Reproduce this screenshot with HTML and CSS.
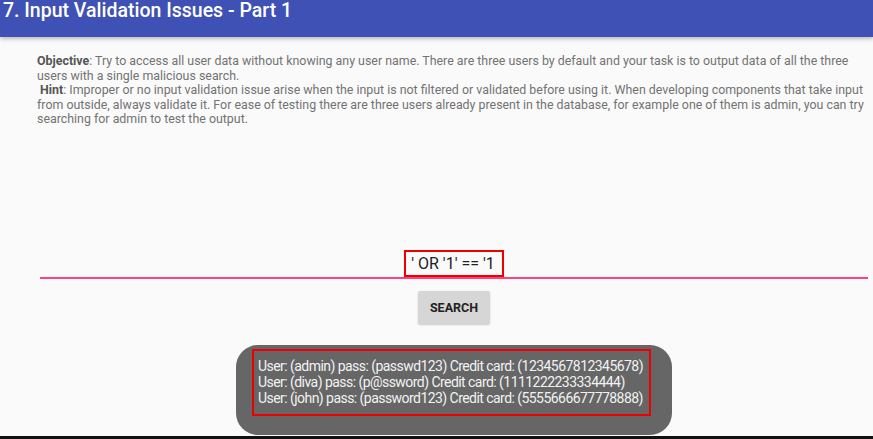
FILE: index.html
```html
<!DOCTYPE html>
<html>
<head>
<meta charset="utf-8">
<link rel="stylesheet" href="styles.css">
</head>
<body>
<div class="screen">
  <header class="appbar">7. Input Validation Issues - Part 1</header>
  <main class="content">
    <p class="desc"><b>Objective</b>: Try to access all user data without knowing any user name. There are three users by default and your task is to output data of all the three users with a single malicious search.<br>&nbsp;<b>Hint</b>: Improper or no input validation issue arise when the input is not filtered or validated before using it. When developing components that take input from outside, always validate it. For ease of testing there are three users already present in the database, for example one of them is admin, you can try searching for admin to test the output.</p>
    <div class="field">
      <span class="query">' OR '1' == '1</span>
    </div>
    <div class="actions">
      <button class="btn">SEARCH</button>
    </div>
  </main>
  <div class="toast">
    <div class="result">
      <div>User: (admin) pass: (passwd123) Credit card: (1234567812345678)</div>
      <div>User: (diva) pass: (p@ssword) Credit card: (1111222233334444)</div>
      <div>User: (john) pass: (password123) Credit card: (5555666677778888)</div>
    </div>
  </div>
  <div class="navline"></div>
</div>
</body>
</html>
```
FILE: styles.css
```css
html, body {
  margin: 0;
  padding: 0;
}
body {
  background: #fafafa;
  font-family: Roboto, "Noto Sans", sans-serif;
  width: 873px;
  height: 439px;
  overflow: hidden;
}
.screen {
  position: relative;
  width: 873px;
  height: 439px;
  display: flex;
  flex-direction: column;
}
.appbar {
  height: 37px;
  background: #3f51b5;
  color: #fff;
  font-size: 19.5px;
  font-weight: 500;
  line-height: 22px;
  padding-left: 3px;
  box-sizing: border-box;
  box-shadow: 0 2px 4px rgba(0,0,0,0.25);
  position: relative;
  z-index: 1;
}
.content {
  display: flex;
  flex-direction: column;
}
.desc {
  margin: 17px 3px 0 37px;
  font-size: 12.4px;
  line-height: 14.5px;
  color: #737373;
}
.desc b {
  color: #555;
  font-weight: 700;
}
.field {
  margin: 122px 5px 0 40px;
  height: 28px;
  border-bottom: 2px solid #ff4081;
  display: flex;
  justify-content: center;
  align-items: flex-end;
}
.query {
  font-size: 16px;
  color: #212121;
  border: 2px solid #e00;
  padding: 2px 7px 1px 5px;
  line-height: 20px;
}
.actions {
  display: flex;
  justify-content: center;
  margin-top: 12px;
  padding-left: 35px;
}
.btn {
  width: 72px;
  height: 33px;
  border: none;
  border-radius: 2px;
  background: #d6d6d6;
  font-family: Roboto, sans-serif;
  font-weight: 700;
  font-size: 12.5px;
  color: #222;
  box-shadow: 0 1px 2px rgba(0,0,0,0.2);
}
.toast {
  position: absolute;
  left: 236px;
  top: 345px;
  width: 436px;
  height: 90px;
  background: #666;
  border-radius: 22px;
  box-sizing: border-box;
  padding: 4px 0 0 16px;
}
.result {
  width: 399px;
  height: 67px;
  box-sizing: border-box;
  border: 2px solid #e00;
  color: #f2f2f2;
  font-size: 14px;
  line-height: 16px;
  padding: 7px 0 0 4px;
  letter-spacing: -0.55px;
  white-space: nowrap;
}
.navline {
  position: absolute;
  left: 0;
  bottom: 0;
  width: 873px;
  height: 3px;
  background: #111;
}
```
